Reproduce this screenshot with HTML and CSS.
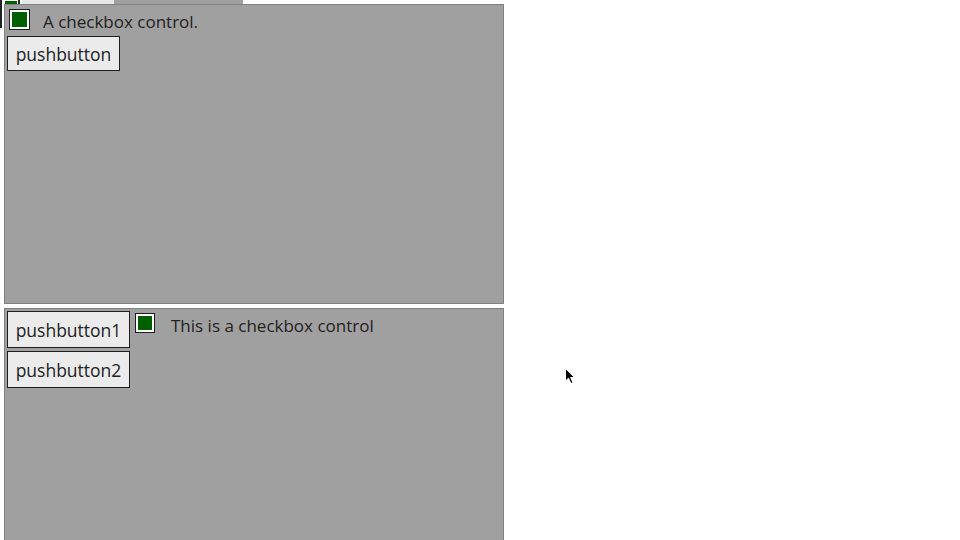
FILE: index.html
```html
<!DOCTYPE html>
<html>
<head>
<meta charset="utf-8">
<link rel="stylesheet" href="styles.css">
</head>
<body>
<div class="backdrop">
  <span class="bk-check"></span>
  <span class="bk-light"></span>
  <span class="bk-gray"></span>
</div>
<div class="stack">
  <section class="panel panel-top">
    <div class="row">
      <span class="check"></span>
      <span class="label label-top">A checkbox control.</span>
    </div>
    <button class="btn btn-top">pushbutton</button>
  </section>
  <section class="panel panel-bottom">
    <div class="col">
      <button class="btn btn-wide">pushbutton1</button>
      <button class="btn btn-wide">pushbutton2</button>
    </div>
    <div class="row row-2">
      <span class="check"></span>
      <span class="label label-bottom">This is a checkbox control</span>
    </div>
  </section>
</div>
<svg class="cursor" width="12" height="18" viewBox="0 0 12 18">
  <path d="M0.5 0.5 L0.5 13 L3.5 10.2 L6 15.5 L8 14.6 L5.6 9.5 L9.5 9.5 Z" fill="#000" stroke="#fff" stroke-width="1"/>
</svg>
</body>
</html>
```
FILE: styles.css
```css
html, body {
  margin: 0;
  padding: 0;
  background: #ffffff;
  width: 960px;
  height: 540px;
  overflow: hidden;
  position: relative;
  font-family: "Open Sans", "DejaVu Sans", sans-serif;
  color: #222222;
}
.backdrop {
  position: absolute;
  left: 0;
  top: 0;
  width: 243px;
  height: 30px;
}
.bk-check {
  position: absolute;
  left: 0;
  top: 0;
  width: 20px;
  height: 28px;
  border-left: 2px solid #222;
  border-right: 2px solid #222;
  box-sizing: border-box;
  background: #fff;
}
.bk-check::after {
  content: "";
  position: absolute;
  left: 3px;
  top: 1px;
  width: 12px;
  height: 3px;
  background: #006000;
}
.bk-light {
  position: absolute;
  left: 22px;
  top: 0;
  width: 92px;
  height: 4px;
  background: #e8e8e8;
}
.bk-gray {
  position: absolute;
  left: 114px;
  top: 0;
  width: 129px;
  height: 4px;
  background: #a0a0a0;
}
.stack {
  position: relative;
  padding: 4px 0 0 4px;
  display: flex;
  flex-direction: column;
  gap: 4px;
}
.panel {
  width: 500px;
  box-sizing: border-box;
  background: #a0a0a0;
  border: 1px solid #808080;
  padding: 2px;
}
.panel-top {
  height: 300px;
  display: flex;
  flex-direction: column;
  align-items: flex-start;
}
.panel-bottom {
  height: 240px;
  display: flex;
  align-items: flex-start;
  gap: 5px;
}
.row {
  display: flex;
  align-items: flex-start;
  height: 29px;
}
.row .check {
  margin-top: 2px;
}
.row .label-top {
  margin-top: 5px;
}
.row-2 {
  height: 26px;
}
.check {
  width: 21px;
  height: 21px;
  box-sizing: border-box;
  border: 1px solid #1e1e1e;
  background: #006000;
  box-shadow: inset 0 0 0 2px #ffffff;
  margin-left: 2px;
  flex: none;
}
.row-2 .check {
  margin-left: 0;
  width: 20px;
  height: 20px;
}
.label {
  font-size: 17px;
  line-height: 20px;
  margin-left: 13px;
  color: #222;
}
.label-bottom {
  margin-left: 16px;
  margin-top: 5px;
}
.btn {
  font-family: inherit;
  font-size: 17.5px;
  color: #222;
  background: #ebebeb;
  border: 1px solid #1e1e1e;
  border-radius: 0;
  margin: 0;
  padding: 0 5px;
  height: 35px;
  box-sizing: border-box;
}
.btn-top {
  width: 113px;
}
.col {
  display: flex;
  flex-direction: column;
  gap: 3px;
}
.btn-wide {
  width: 123px;
  height: 37px;
}
.cursor {
  position: absolute;
  left: 565px;
  top: 368px;
}
```
